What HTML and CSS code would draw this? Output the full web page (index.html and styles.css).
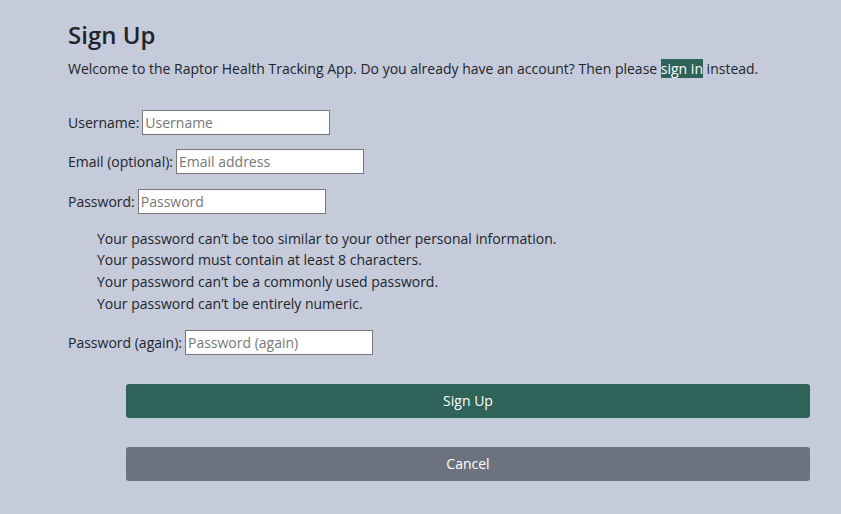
FILE: index.html
```html
<!DOCTYPE html>
<html lang="en">
<head>
<meta charset="utf-8">
<title>Sign Up</title>
<link rel="stylesheet" href="styles.css">
</head>
<body>
<main class="page">
  <h1 class="title">Sign Up</h1>
  <p class="intro">Welcome to the Raptor Health Tracking App. Do you already have an account? Then please <a class="signin" href="#">sign in</a> instead.</p>
  <form class="form">
    <div class="row"><label class="label" for="u">Username:</label><input class="field" id="u" type="text" placeholder="Username"></div>
    <div class="row"><label class="label" for="e">Email (optional):</label><input class="field" id="e" type="text" placeholder="Email address"></div>
    <div class="row"><label class="label" for="p">Password:</label><input class="field" id="p" type="text" placeholder="Password"></div>
    <ul class="help">
      <li>Your password can’t be too similar to your other personal information.</li>
      <li>Your password must contain at least 8 characters.</li>
      <li>Your password can’t be a commonly used password.</li>
      <li>Your password can’t be entirely numeric.</li>
    </ul>
    <div class="row"><label class="label" for="p2">Password (again):</label><input class="field" id="p2" type="text" placeholder="Password (again)"></div>
    <div class="actions">
      <button class="btn btn-primary" type="button">Sign Up</button>
      <button class="btn btn-secondary" type="button">Cancel</button>
    </div>
  </form>
</main>
</body>
</html>
```

FILE: styles.css
```css
html, body {
  margin: 0;
  background: #c5cbdb;
}
body {
  font-family: "Open Sans", "Noto Sans", sans-serif;
  font-size: 14px;
  color: #212529;
}
.page {
  padding: 20px 31px 0 68px;
}
.title {
  font-size: 24px;
  font-weight: 600;
  line-height: 30px;
  margin: 0 0 8px;
}
.intro {
  margin: 0 0 29px;
  line-height: 22px;
}
.signin {
  background: #2f6359;
  color: #fff;
  text-decoration: none;
}
.form {
  display: flex;
  flex-direction: column;
}
.row {
  display: flex;
  align-items: center;
  gap: 3px;
  height: 26px;
  margin-bottom: 13.5px;
}
.field {
  box-sizing: border-box;
  width: 188px;
  height: 25px;
  border: 1px solid #767676;
  background: #fff;
  font: inherit;
  padding: 0 2px;
  margin: 0;
}
.field::placeholder {
  color: #777;
}
.help {
  list-style: none;
  margin: 0 0 15px;
  padding: 0 0 0 29px;
  line-height: 21.67px;
}
.actions {
  display: flex;
  flex-direction: column;
  gap: 29px;
  margin: 15px 0 0 58px;
}
.btn {
  height: 34px;
  border: 0;
  border-radius: 3px;
  color: #fff;
  font: inherit;
  padding: 0;
}
.btn-primary {
  background: #2f6359;
}
.btn-secondary {
  background: #6c737e;
}
```
